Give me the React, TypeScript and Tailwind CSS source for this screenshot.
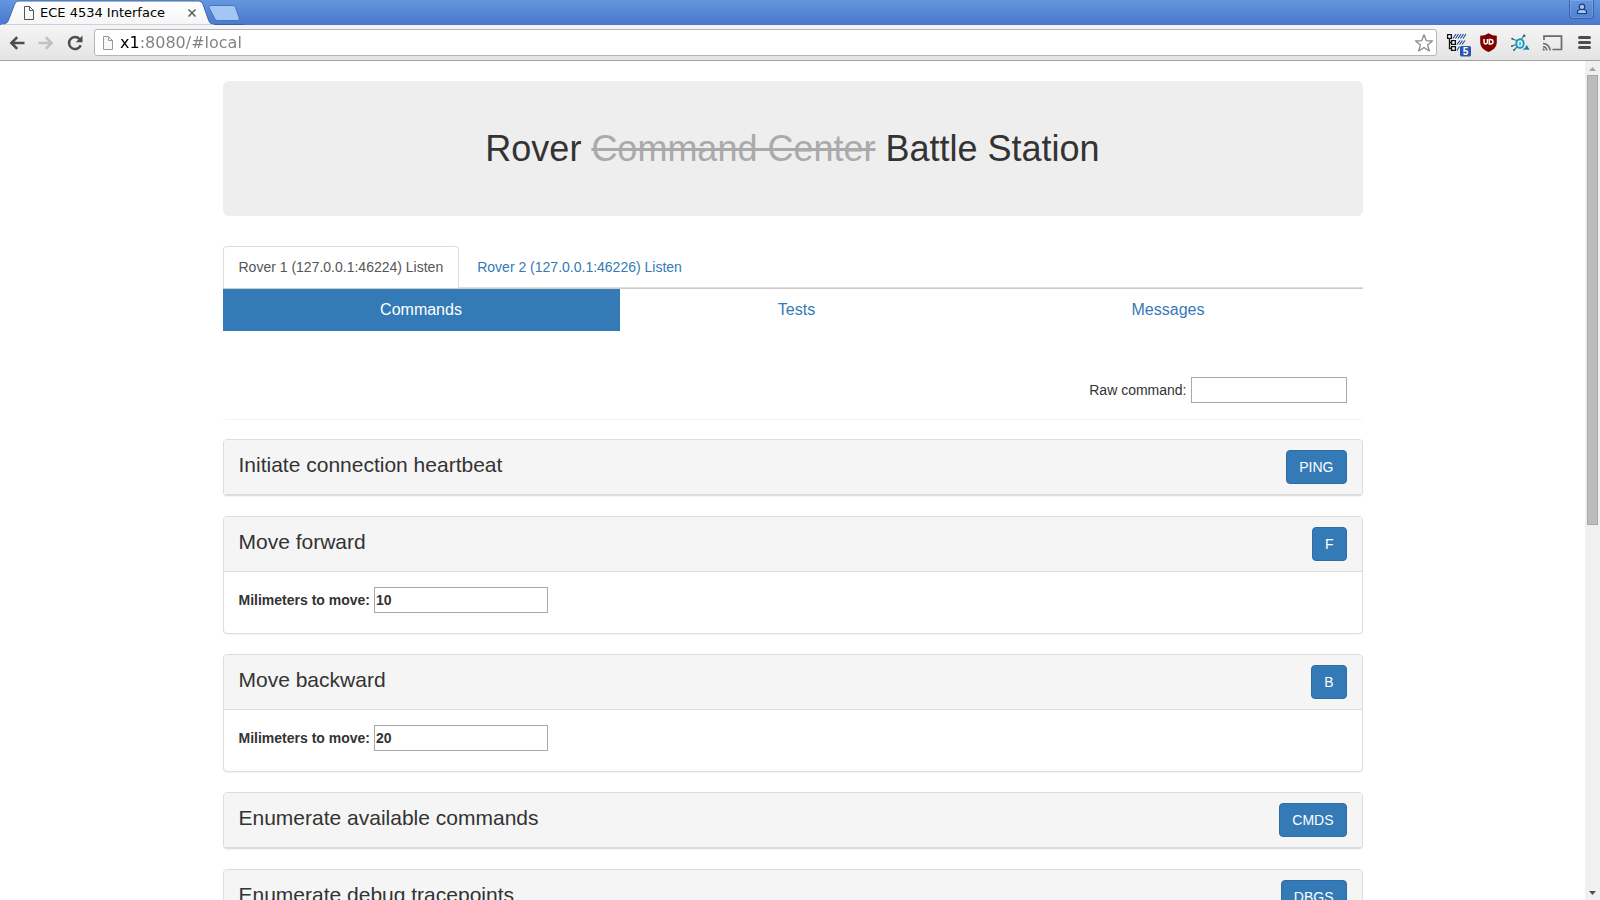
import { useState } from "react";

type Command = {
  title: string;
  code: string;
  param?: { label: string; value: string };
};

const commands: Command[] = [
  { title: "Initiate connection heartbeat", code: "PING" },
  { title: "Move forward", code: "F", param: { label: "Milimeters to move:", value: "10" } },
  { title: "Move backward", code: "B", param: { label: "Milimeters to move:", value: "20" } },
  { title: "Enumerate available commands", code: "CMDS" },
  { title: "Enumerate debug tracepoints", code: "DBGS" },
];

const rovers = ["Rover 1 (127.0.0.1:46224) Listen", "Rover 2 (127.0.0.1:46226) Listen"];
const views = ["Commands", "Tests", "Messages"];

function PageIcon({ className }: { className: string }) {
  return (
    <svg viewBox="0 0 12 16" className={className} fill="none" stroke="currentColor" aria-hidden="true">
      <path d="M1.5 1.5H6.5L10.5 5.5V14.5H1.5Z" fill="#f8f8f8" />
      <path d="M6.5 1.5V5.5H10.5" />
    </svg>
  );
}

function TabStrip() {
  return (
    <div className="relative flex h-[25px] shrink-0 items-center justify-between bg-linear-to-b from-[#6596df] to-[#4a78cb]">
      <svg className="absolute left-0 top-0 h-[25px] w-[244px]" viewBox="0 0 244 25" aria-hidden="true">
        <defs>
          <linearGradient id="tab" x1="0" y1="0" x2="0" y2="1">
            <stop offset="0" stopColor="#ffffff" />
            <stop offset="1" stopColor="#f5f5f5" />
          </linearGradient>
        </defs>
        <path d="M0 24.500H244" stroke="#3b62a8" />
        <path
          d="M0 25C5 24.500 7 23.500 8.500 20L14.500 4.500C15.500 2 17 1 19.500 1H197.500C200.500 1 202 2 203 4.500L208.500 20C209.800 23.500 211.500 24.500 215 25Z"
          fill="url(#tab)"
          stroke="#3f66ad"
          strokeWidth="1"
        />
        <path d="M1 25H214" stroke="#f5f5f5" />
        <path
          d="M211 5.500H232C234 5.500 235 6 235.600 7.500L239 17.500C239.600 19.500 239 20.500 237 20.500H218.500C216.500 20.500 215.300 20 214.600 18.200L209.300 8C208.700 6.500 209.100 5.500 211 5.500Z"
          fill="#a3c7f5"
          stroke="#4a75ba"
        />
      </svg>
      <div className="relative flex w-[200px] items-center pl-[23px]">
        <PageIcon className="h-4 w-3 shrink-0 text-[#555]" />
        <span className="ml-[5px] flex-1 whitespace-nowrap font-['DejaVu_Sans',sans-serif] text-[13px] leading-[24px] text-black">
          ECE 4534 Interface
        </span>
        <button aria-label="Close tab" className="flex h-4 w-4 shrink-0 items-center justify-center text-[#5c5c5c]">
          <svg viewBox="0 0 8 8" className="h-2 w-2" stroke="currentColor" strokeWidth="1.500" aria-hidden="true">
            <path d="M0.500 0.500L7.500 7.500M7.500 0.500L0.500 7.500" />
          </svg>
        </button>
      </div>
      <button
        aria-label="User profile"
        className="mr-[6px] flex h-[19px] w-[25px] items-center justify-center self-start rounded-b-[4px] border border-t-0 border-[#3a62ad] shadow-[inset_0_0_0_1px_rgba(255,255,255,0.15)]"
      >
        <svg viewBox="0 0 12 12" className="h-3 w-3" fill="#a9c6f3" stroke="#1f3c78" strokeWidth="1.200" aria-hidden="true">
          <path d="M1.500 10.500V8.800C1.500 7.500 2.600 6.800 4.200 6.500H7.800C9.400 6.800 10.500 7.500 10.500 8.800V10.500Z" />
          <circle cx="6" cy="3.900" r="2.700" />
        </svg>
      </button>
    </div>
  );
}

function Arrow({ flip }: { flip?: boolean }) {
  return (
    <svg viewBox="0 0 16 14" className="h-[14px] w-4" fill="none" stroke="currentColor" strokeWidth="2.600" aria-hidden="true">
      {flip ? <path d="M0.500 7H13M7.800 1.200L13.600 7L7.800 12.800" /> : <path d="M15.500 7H3M8.200 1.200L2.400 7L8.200 12.800" />}
    </svg>
  );
}

function Toolbar() {
  return (
    <div className="flex h-[36px] shrink-0 items-center border-b border-[#a3a3a3] bg-linear-to-b from-[#f5f5f5] to-[#e4e4e4] pl-[9px] pr-1">
      <div className="flex shrink-0 items-center gap-[13px]">
        <button aria-label="Back" className="text-[#4d4d4d]"><Arrow /></button>
        <button aria-label="Forward" className="text-[#c2c2c2]"><Arrow flip /></button>
        <button aria-label="Reload" className="text-[#4d4d4d]">
          <svg viewBox="0 0 16 16" className="h-4 w-4" fill="none" stroke="currentColor" strokeWidth="2.500" aria-hidden="true">
            <path d="M12.500 4A6 6 0 1 0 13.700 10.200" />
            <path d="M15.500 0.500V7.300H8.700Z" fill="currentColor" stroke="none" />
          </svg>
        </button>
      </div>
      <div className="ml-[11px] flex h-[27px] min-w-0 flex-1 items-center rounded-[3px] border border-[#b5b5b5] bg-white pl-[7px] pr-[2px]">
        <PageIcon className="h-4 w-3 shrink-0 text-[#999]" />
        <input
          aria-label="Address"
          defaultValue="x1:8080/#local"
          className="ml-[6px] min-w-0 flex-1 bg-linear-to-r from-black from-[20px] to-[#808080] to-[20px] bg-clip-text font-['DejaVu_Sans',sans-serif] text-[16px] leading-[24px] text-transparent outline-none"
        />
        <button aria-label="Bookmark this page" className="shrink-0 text-[#8a8a8a]">
          <svg viewBox="0 0 20 20" className="h-5 w-5" fill="#fff" stroke="currentColor" strokeWidth="1.300" strokeLinejoin="round" aria-hidden="true">
            <path d="M10 1.800L12.300 7.700L18.400 8L13.600 11.900L15.300 18L10 14.500L4.700 18L6.400 11.900L1.600 8L7.700 7.700Z" />
          </svg>
        </button>
      </div>
      <div className="ml-[7px] flex shrink-0 items-center gap-[8px]">
        <button aria-label="Outline extension">
          <svg viewBox="0 0 24 24" className="h-6 w-6 overflow-visible" fill="none" aria-hidden="true">
            <path d="M5.500 8V17.500H8M5.500 11.500H8" stroke="#111" strokeWidth="1.300" />
            <g fill="#fff" stroke="#111" strokeWidth="1.300">
              <path d="M3.600 3.600H7.400V7.400H3.600ZM7.600 9.600H11.400V13.400H7.600ZM7.600 15.600H11.400V19.400H7.600Z" />
            </g>
            <g stroke="#1d4796" strokeWidth="1.100">
              <path d="M9 7.500L12 3M11.500 7.500L14.500 3M14 7.500L17 3M16.500 7.500L19.500 3M19 7.500L22 3" />
              <path d="M13 13.500L16 9.500M15.500 13.500L18.500 9.500M18 13.500L21 9.500M13 19.500L15.500 15.500" />
            </g>
            <rect x="16" y="15" width="11" height="10.500" rx="1.500" fill="#2a56b0" />
            <text x="21.500" y="24" textAnchor="middle" fontSize="10" fontWeight="bold" fontFamily="Liberation Sans, sans-serif" fill="#fff">5</text>
          </svg>
        </button>
        <button aria-label="Content blocker extension">
          <svg viewBox="0 0 24 24" className="h-6 w-6" aria-hidden="true">
            <path d="M12.500 2.300C15 4 18 4.800 20.800 4.800V10.800C20.800 16.300 17.500 19 12.500 21C7.500 19 4.200 16.300 4.200 10.800V4.800C7 4.800 10 4 12.500 2.300Z" fill="#800000" />
            <path d="M8 8V11.300A1.700 1.700 0 0 0 11.400 11.300V8" fill="none" stroke="#fff" strokeWidth="1.500" />
            <path d="M13.300 8.400H14.500C17.800 8.400 17.800 13 14.500 13H13.300Z" fill="none" stroke="#fff" strokeWidth="1.500" />
          </svg>
        </button>
        <button aria-label="Network extension">
          <svg viewBox="0 0 24 24" className="h-6 w-6" aria-hidden="true">
            <g stroke="#2b6f88" strokeWidth="1.100" fill="none">
              <path d="M8.500 9.500L4.500 8M8 13.500L4 15M9 16L6 19M13.500 8L16 4.500" />
            </g>
            <ellipse cx="12" cy="12.500" rx="3.700" ry="4.300" fill="#e9fbff" stroke="#1396bd" strokeWidth="1.900" />
            <rect x="11" y="11" width="2.200" height="3.600" rx="1" fill="#49bfd8" />
            <path d="M14.500 18.500L17 17L18.700 14L21.500 18.800Z" fill="#0b7ba0" />
            <g fill="#245c70">
              <circle cx="4.200" cy="7.800" r="1" />
              <circle cx="3.900" cy="15.200" r="0.900" />
              <circle cx="6" cy="19" r="0.900" />
              <circle cx="16.200" cy="4.800" r="1.200" />
            </g>
          </svg>
        </button>
        <button aria-label="Cast">
          <svg viewBox="0 0 24 24" className="h-6 w-6" fill="none" stroke="#6a6a6a" aria-hidden="true">
            <path d="M4 9V5.200H21.500V18.500H12.500" strokeWidth="1.700" />
            <path d="M3 15.800A4 4 0 0 1 6.800 19.500M3 12.500A7 7 0 0 1 10 19.500" strokeWidth="1.500" />
            <path d="M2.800 17.300A2.300 2.300 0 0 1 5 19.500H2.800Z" fill="#6a6a6a" stroke="none" />
          </svg>
        </button>
        <button aria-label="Menu">
          <svg viewBox="0 0 24 24" className="h-6 w-6" stroke="#4d4d4d" strokeWidth="3" strokeLinecap="round" aria-hidden="true">
            <path d="M7.500 6.500H17.500M7.500 11.500H17.500M7.500 16.500H17.500" />
          </svg>
        </button>
      </div>
    </div>
  );
}

function CommandPanel({ title, code, param }: Command) {
  return (
    <section className="mb-5 rounded-[4px] border border-[#ddd] bg-white shadow-[0_1px_1px_rgba(0,0,0,0.05)]">
      <div className="flex items-start justify-between rounded-t-[3px] border-b border-[#ddd] bg-[#f5f5f5] px-[15px] py-[10px]">
        <h3 className="text-[21px] leading-[30px]">{title}</h3>
        <button className="h-[34px] rounded-[4px] border border-[#2e6da4] bg-[#337ab7] px-3 text-[14px] leading-[20px] text-white">
          {code}
        </button>
      </div>
      {param && (
        <div className="px-[15px] pt-[15px] pb-5">
          <label className="flex items-center gap-1 text-[14px] leading-[20px] font-bold">
            {param.label}
            <input defaultValue={param.value} className="h-[26px] w-[174px] border border-[#a9a9a9] bg-white px-px outline-none" />
          </label>
        </div>
      )}
    </section>
  );
}

function Scrollbar() {
  return (
    <div className="flex w-[15px] shrink-0 flex-col items-center bg-[#f0f0f0]" aria-hidden="true">
      <svg viewBox="0 0 15 14" className="h-[14px] w-[15px] shrink-0">
        <path d="M4 10L7.500 6L11 10Z" fill="#a3a3a3" />
      </svg>
      <div className="w-[11px] flex-[449] border border-[#a8a8a8] bg-[#bcbcbc]" />
      <div className="flex-[362]" />
      <svg viewBox="0 0 15 14" className="h-[14px] w-[15px] shrink-0">
        <path d="M4 5L7.500 9L11 5Z" fill="#505050" />
      </svg>
    </div>
  );
}

export default function App() {
  const [rover, setRover] = useState(0);
  const [view, setView] = useState(0);

  return (
    <div className="flex h-screen flex-col overflow-hidden bg-white font-['Liberation_Sans',Arial,sans-serif] text-[#333]">
      <TabStrip />
      <Toolbar />
      <div className="flex min-h-0 flex-1">
        <main className="min-w-0 flex-1 overflow-hidden px-[15px] pt-5">
          <div className="mx-auto max-w-[1140px]">
            <header className="mb-[30px] rounded-[6px] bg-[#eee] px-[60px] py-12 text-center">
              <h1 className="text-[36px] leading-[39px]">
                Rover <del className="text-[#aaa]">Command Center</del> Battle Station
              </h1>
            </header>

            <nav className="flex gap-[2px] border-b border-[#ddd] text-[14px] leading-[20px]">
              {rovers.map((name, i) => (
                <a
                  key={name}
                  href={`#rover-${i + 1}`}
                  onClick={() => setRover(i)}
                  className={
                    i === rover
                      ? "-mb-px rounded-t-[4px] border border-[#ddd] border-b-white bg-white px-[15px] py-[10px] text-[#555]"
                      : "-mb-px rounded-t-[4px] border border-transparent px-[15px] py-[10px] text-[#337ab7]"
                  }
                >
                  {name}
                </a>
              ))}
            </nav>

            <nav className="grid grid-cols-[397fr_354fr_389fr] border-t border-[#ccc] text-center text-[16px] leading-[22px]">
              {views.map((name, i) => (
                <a
                  key={name}
                  href={`#${name.toLowerCase()}`}
                  onClick={() => setView(i)}
                  className={i === view ? "bg-[#337ab7] py-[10px] text-white" : "py-[10px] text-[#337ab7]"}
                >
                  {name}
                </a>
              ))}
            </nav>

            <form className="mt-[30px] mb-5 flex justify-end rounded-[4px] px-4 pt-4 pb-4 shadow-[0_1px_1px_rgba(0,0,0,0.05)]">
              <label className="flex items-center gap-1 text-[14px] leading-[20px]">
                Raw command:
                <input className="h-[26px] w-[156px] border border-[#a9a9a9] bg-white px-px outline-none" />
              </label>
            </form>

            {commands.map((command) => (
              <CommandPanel key={command.code} {...command} />
            ))}
          </div>
        </main>
        <Scrollbar />
      </div>
    </div>
  );
}
